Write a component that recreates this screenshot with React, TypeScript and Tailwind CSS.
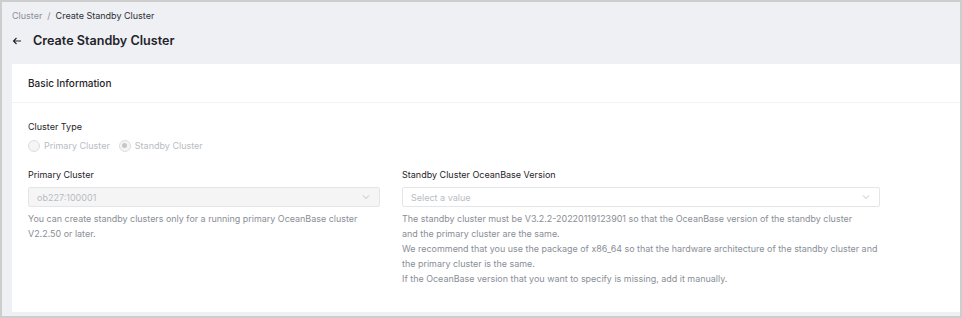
import React from 'react';

function Chevron() {
  return (
    <svg width="10" height="10" viewBox="0 0 10 10" fill="none" className="text-[#b5b9c0]">
      <path d="M2 3.5 L5 6.5 L8 3.5" stroke="currentColor" strokeWidth="0.9" />
    </svg>
  );
}

function Radio({ label, checked }: { label: string; checked?: boolean }) {
  return (
    <label className="flex items-center gap-[4px]">
      <span className="w-[12px] h-[12px] rounded-full border border-[#dcdee2] bg-[#f5f5f5] flex items-center justify-center">
        {checked && <span className="w-[5px] h-[5px] rounded-full bg-[#c4c6ca]" />}
      </span>
      <span className="text-[#b8bcc2]">{label}</span>
    </label>
  );
}

export default function App() {
  const versionHelp = [
    'The standby cluster must be V3.2.2-20220119123901 so that the OceanBase version of the standby cluster',
    'and the primary cluster are the same.',
    'We recommend that you use the package of x86_64 so that the hardware architecture of the standby cluster and',
    'the primary cluster is the same.',
    'If the OceanBase version that you want to specify is missing, add it manually.'
  ];

  return (
    <div
      className="w-[962px] h-[318px] border-2 border-[#cdcdcd] bg-[#eff0f4] flex flex-col pl-[10px] pb-[4px] overflow-hidden text-[#1f2329]"
      style={{ fontFamily: 'Inter, "Noto Sans", sans-serif' }}
    >
      {/* breadcrumb */}
      <div className="h-[24px] pt-[7px] text-[9px] leading-[13px] flex gap-[5px]">
        <span className="text-[#8a8f99]">Cluster</span>
        <span className="text-[#8a8f99]">/</span>
        <span className="text-[#2b2f36]">Create Standby Cluster</span>
      </div>

      {/* title */}
      <div className="h-[38px] flex items-start gap-[11px] pt-[5px]">
        <svg width="10" height="10" viewBox="0 0 10 10" fill="none" className="mt-[5px]">
          <path d="M9 5 H1.5 M4.5 2 L1.5 5 L4.5 8" stroke="#1f2329" strokeWidth="1.1" />
        </svg>
        <h1 className="text-[12.6px] leading-[20px] font-semibold">Create Standby Cluster</h1>
      </div>

      {/* card */}
      <div className="flex-1 bg-white flex flex-col">
        <div className="h-[39px] px-[16px] flex items-center border-b border-[#f2f3f5] text-[10px] font-medium">
          Basic Information
        </div>

        <div className="px-[16px] pt-[16px] text-[9px] leading-[15px]">
          <div className="text-[#1f2329]">Cluster Type</div>
          <div className="flex gap-[9px] mt-[4px]">
            <Radio label="Primary Cluster" />
            <Radio label="Standby Cluster" checked />
          </div>

          <div className="flex gap-[22px] mt-[14px]">
            <div className="w-[352px]">
              <div className="h-[15px]">Primary Cluster</div>
              <div className="mt-[5px] h-[20px] border border-[#e3e5e8] bg-[#f5f5f5] rounded-[2px] flex items-center justify-between px-[8px]">
                <span className="text-[#b8bcc2]">ob227:100001</span>
                <Chevron />
              </div>
              <div className="mt-[4px] text-[#8a8e96] text-[8.95px] whitespace-nowrap">
                <p>You can create standby clusters only for a running primary OceanBase cluster</p>
                <p>V2.2.50 or later.</p>
              </div>
            </div>

            <div className="w-[478px]">
              <div className="h-[15px]">Standby Cluster OceanBase Version</div>
              <div className="mt-[5px] h-[20px] border border-[#e3e5e8] bg-white rounded-[2px] flex items-center justify-between px-[8px]">
                <span className="text-[#b8bcc2]">Select a value</span>
                <Chevron />
              </div>
              <div className="mt-[4px] text-[#8a8e96] text-[8.95px] whitespace-nowrap">
                {versionHelp.map((line, i) => (
                  <p key={i}>{line}</p>
                ))}
              </div>
            </div>
          </div>
        </div>
      </div>
    </div>
  );
}
